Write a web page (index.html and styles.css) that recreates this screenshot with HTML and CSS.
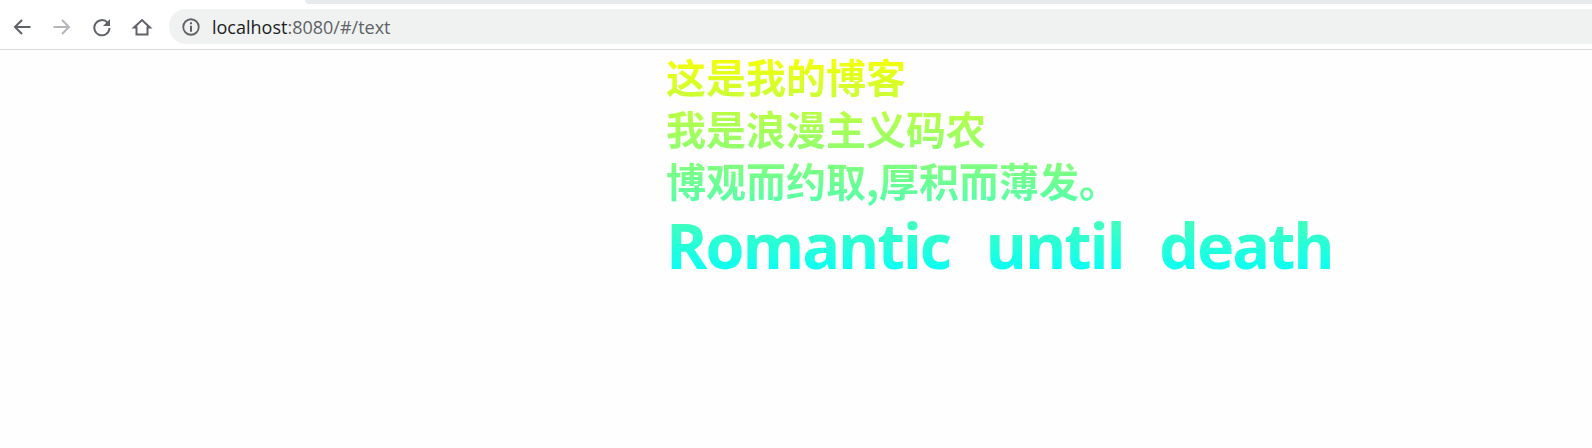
FILE: index.html
```html
<!DOCTYPE html>
<html lang="zh">
<head>
<meta charset="utf-8">
<title>text</title>
<link rel="stylesheet" href="styles.css">
</head>
<body>
<header class="toolbar">
  <div class="tabstrip"></div>
  <nav class="nav">
    <svg class="icon" viewBox="0 0 24 24"><path class="stroke" d="M20.500 12H5M12 5l-7 7 7 7"/></svg>
    <svg class="icon disabled" viewBox="0 0 24 24"><path class="stroke" d="M3.500 12H19M12 5l7 7-7 7"/></svg>
    <svg class="icon" viewBox="0 0 24 24"><path class="stroke" d="M17.700 7.800A7.600 7.600 0 1 0 19.500 13"/><path class="fill" d="M20 4v7h-7z"/></svg>
    <svg class="icon" viewBox="0 0 24 24"><path class="stroke" d="M4 12.500 12 5l8 7.500h-2.500v7h-11v-7z"/></svg>
  </nav>
  <div class="address">
    <svg class="info" viewBox="0 0 16 16"><circle class="ring" cx="8" cy="8" r="6.900"/><path class="dot" d="M7.100 3.800h1.800v1.800H7.100zM7.100 6.900h1.800v5.300H7.100z"/></svg>
    <span class="host">localhost</span><span class="rest">:8080/#/text</span>
  </div>
</header>
<main class="page">
  <div class="gradient">
    <p class="line">这是我的博客</p>
    <p class="line">我是浪漫主义码农</p>
    <p class="line">博观而约取,厚积而薄发。</p>
    <p class="title">Romantic  until  death</p>
  </div>
</main>
</body>
</html>
```
FILE: styles.css
```css
html, body {
  margin: 0;
  height: 100%;
  background: #fefefe;
  overflow: hidden;
}
body {
  font-family: "Noto Sans CJK SC", sans-serif;
}
.toolbar {
  position: relative;
  display: flex;
  align-items: center;
  height: 45px;
  padding-top: 4px;
  background: #fff;
  border-bottom: 1px solid #d9d9d9;
}
.tabstrip {
  position: absolute;
  top: 0;
  left: 305px;
  right: 0;
  height: 4px;
  background: #e8eaed;
  border-bottom-left-radius: 8px;
}
.nav {
  display: flex;
  align-items: center;
  gap: 16px;
  padding-left: 10px;
  width: 169px;
  box-sizing: border-box;
  flex: none;
}
.icon {
  width: 24px;
  height: 24px;
  flex: none;
}
.stroke {
  fill: none;
  stroke: #5f6368;
  stroke-width: 2;
}
.fill {
  fill: #5f6368;
}
.disabled .stroke {
  stroke: #b4b6b9;
}
.address {
  flex: 1;
  display: flex;
  align-items: center;
  height: 35px;
  padding-left: 13px;
  border-radius: 17px 0 0 17px;
  background: #f0f2f1;
  font-family: "Open Sans", sans-serif;
  font-size: 18px;
}
.info {
  width: 18px;
  height: 18px;
  margin-right: 12px;
}
.ring {
  fill: none;
  stroke: #5f6368;
  stroke-width: 1.600;
}
.dot {
  fill: #5f6368;
}
.host {
  color: #202124;
}
.rest {
  color: #5f6368;
}
.page {
  padding-left: 666px;
}
.gradient {
  width: max-content;
  background: linear-gradient(to bottom, #ffff00, #00ffff);
  -webkit-background-clip: text;
  background-clip: text;
  color: transparent;
  font-weight: 700;
}
.line {
  margin: 0;
  font-size: 40px;
  line-height: 52px;
}
.title {
  margin: 0;
  padding-top: 4px;
  font-family: "Open Sans", "Noto Sans CJK SC", sans-serif;
  font-size: 63px;
  line-height: 70px;
  font-weight: 700;
  letter-spacing: -2.100px;
  word-spacing: 3.500px;
  white-space: pre;
}
```
